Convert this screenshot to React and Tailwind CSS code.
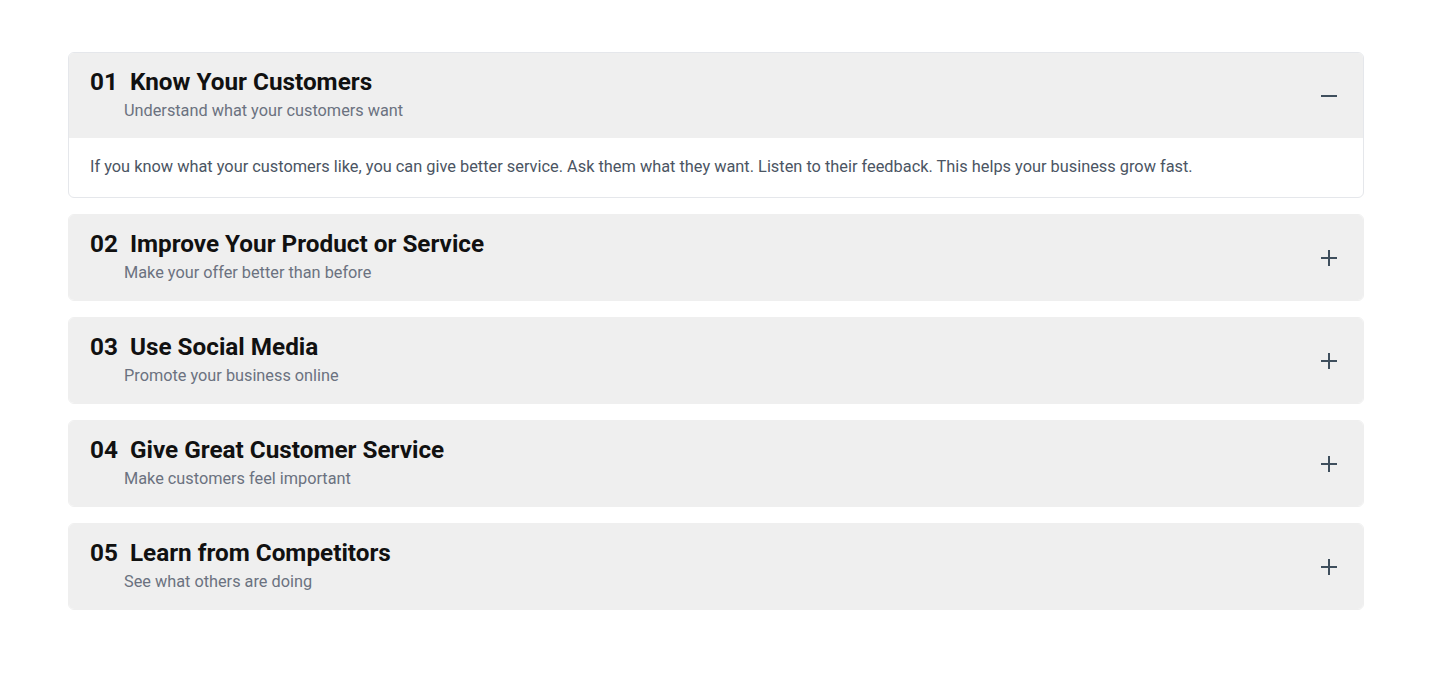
import React, { useState } from 'react';

const items = [
    {
        num: '01',
        title: 'Know Your Customers',
        sub: 'Understand what your customers want',
        body: 'If you know what your customers like, you can give better service. Ask them what they want. Listen to their feedback. This helps your business grow fast.',
    },
    {
        num: '02',
        title: 'Improve Your Product or Service',
        sub: 'Make your offer better than before',
        body: 'Keep making your product better. Fix problems quickly and add features that your customers ask for.',
    },
    {
        num: '03',
        title: 'Use Social Media',
        sub: 'Promote your business online',
        body: 'Share posts, photos and videos about your business. Talk with people and answer their questions.',
    },
    {
        num: '04',
        title: 'Give Great Customer Service',
        sub: 'Make customers feel important',
        body: 'Be friendly and helpful. Answer quickly and solve problems so customers come back again.',
    },
    {
        num: '05',
        title: 'Learn from Competitors',
        sub: 'See what others are doing',
        body: 'Watch what other businesses do well and where they fail. Use what you learn to do better.',
    },
];

// plus / minus toggle icon
const Toggle = ({ open }) => (
    <svg width="16" height="16" viewBox="0 0 16 16" className="text-[#3f4f5d]">
        <line x1="0" y1="8" x2="16" y2="8" stroke="currentColor" strokeWidth="2" />
        {!open && <line x1="8" y1="0" x2="8" y2="16" stroke="currentColor" strokeWidth="2" />}
    </svg>
);

const Item = ({ item, open, onToggle }) => (
    <div className={`rounded-md border overflow-hidden ${open ? 'border-[#e5e7eb] bg-white' : 'border-[#efefef] bg-[#efefef]'}`}>
        <button
            onClick={onToggle}
            className="w-full flex items-center justify-between bg-[#efefef] pl-[21px] pr-[26px] pt-[15px] pb-[15px] text-left"
        >
            <div>
                <div className="flex items-baseline text-[24.3px] leading-7 font-bold text-[#111111]">
                    <span className="mr-3">{item.num}</span>
                    <span>{item.title}</span>
                </div>
                <div className="pl-[34px] mt-[3px] text-[16.3px] leading-6 text-[#6b7280]">{item.sub}</div>
            </div>
            <Toggle open={open} />
        </button>
        {open && (
            <div className="px-[21px] pt-[17px] pb-[18px] text-[16.35px] leading-6 text-[#4b5563]">
                {item.body}
            </div>
        )}
    </div>
);

export default function App() {
    const [open, setOpen] = useState(0);
    return (
        <div className="min-h-screen bg-white pt-[52px] px-[68px]" style={{ fontFamily: 'Roboto, "Noto Sans", sans-serif' }}>
            <div className="w-[1296px] flex flex-col gap-4">
                {items.map((it, i) => (
                    <Item key={it.num} item={it} open={open === i} onToggle={() => setOpen(open === i ? -1 : i)} />
                ))}
            </div>
        </div>
    );
}
